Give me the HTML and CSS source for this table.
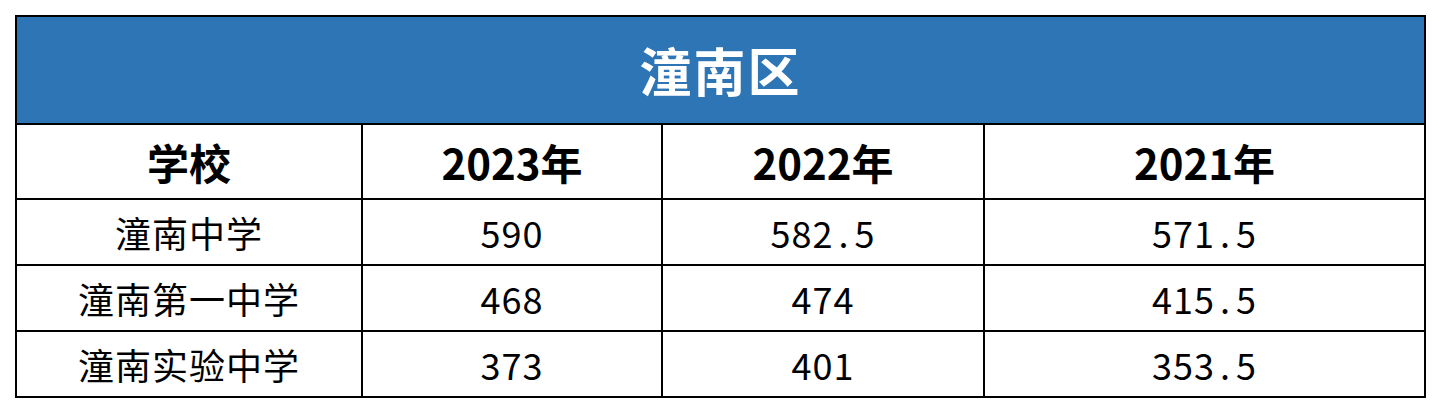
FILE: index.html
```html
<!DOCTYPE html>
<html lang="zh-CN">
<head>
<meta charset="utf-8">
<title>潼南区</title>
<link rel="stylesheet" href="styles.css">
</head>
<body>
<table class="scores">
  <colgroup>
    <col class="c1"><col class="c2"><col class="c3"><col class="c4">
  </colgroup>
  <thead>
    <tr class="title-row"><th colspan="4" class="title">潼南区</th></tr>
    <tr class="head-row"><th>学校</th><th>2023年</th><th>2022年</th><th>2021年</th></tr>
  </thead>
  <tbody>
    <tr><td>潼南中学</td><td>590</td><td>582<span class="dot">.</span>5</td><td>571<span class="dot">.</span>5</td></tr>
    <tr><td>潼南第一中学</td><td>468</td><td>474</td><td>415<span class="dot">.</span>5</td></tr>
    <tr><td>潼南实验中学</td><td>373</td><td>401</td><td>353<span class="dot">.</span>5</td></tr>
  </tbody>
</table>
</body>
</html>
```

FILE: styles.css
```css
html, body {
  margin: 0;
  padding: 0;
  background: #ffffff;
}
body {
  padding: 15px 0 0 15px;
  font-family: "Noto Sans CJK SC", "Noto Sans", sans-serif;
  color: #000;
}
.scores {
  border-collapse: collapse;
  table-layout: fixed;
  width: 1411px;
}
.c1 { width: 346px; }
.c2 { width: 300px; }
.c3 { width: 322px; }
.c4 { width: 441px; }
.scores th, .scores td {
  border: 2px solid #000;
  padding: 0;
  text-align: center;
  vertical-align: middle;
}
.title {
  background: #2e75b6;
  color: #fff;
  font-size: 52px;
  font-weight: 700;
  letter-spacing: 2px;
  height: 106px;
  line-height: 1;
  padding-top: 2px;
}
.head-row th {
  height: 73px;
  font-size: 42px;
  font-weight: 700;
  line-height: 1;
}
.scores td {
  height: 64px;
  font-size: 36px;
  font-weight: 400;
  line-height: 1;
  letter-spacing: 1px;
}
.dot {
  padding: 0 5px;
}
```
